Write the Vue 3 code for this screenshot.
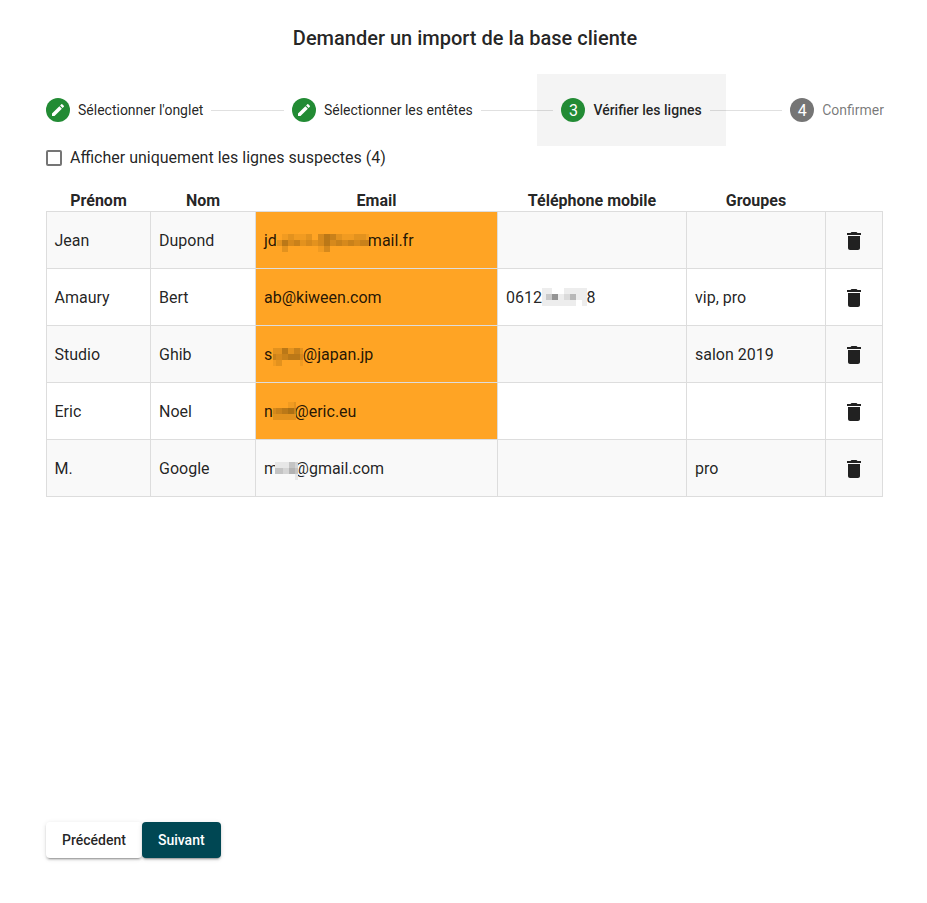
<script setup>
import { ref } from 'vue'

const steps = [
  { label: "Sélectionner l'onglet", done: true },
  { label: 'Sélectionner les entêtes', done: true },
  { label: 'Vérifier les lignes', active: true },
  { label: 'Confirmer' },
]
const headers = ['Prénom', 'Nom', 'Email', 'Téléphone mobile', 'Groupes', '']
const suspectOnly = ref(false)

// Masks hide part of a value: each digit is the darkness of one mosaic block.
const rows = [
  {
    first: 'Jean', last: 'Dupond', suspect: true, phone: null, groups: '',
    email: { before: 'jd', after: 'mail.fr', width: 92, shift: 5, size: 6, top: 4, pull: [0, -1], lines: ['0121120354211221', '2534232353434344', '0200000130000000'] },
  },
  {
    first: 'Amaury', last: 'Bert', suspect: true, groups: 'vip, pro',
    email: { before: 'ab@kiween.com' },
    phone: { before: '0612', after: '8', width: 45, shift: 4, size: 6, top: 1, pull: [0, -0.5], lines: ['11001111', '13612411', '11111101'] },
  },
  {
    first: 'Studio', last: 'Ghib', suspect: true, phone: null, groups: 'salon 2019',
    email: { before: 's', after: '@japan.jp', width: 30, shift: 3, size: 6, top: 4, pull: [0.6, 0], lines: ['225242', '434553', '120001'] },
  },
  {
    first: 'Eric', last: 'Noel', suspect: true, phone: null, groups: '',
    email: { before: 'n', after: '@eric.eu', width: 23, shift: 3, size: 6, top: 1, pull: [0, -1.5], lines: ['00012', '34564', '22222'] },
  },
  {
    first: 'M.', last: 'Google', suspect: false, phone: null, groups: 'pro',
    email: { before: 'm', after: '@gmail.com', width: 23, shift: 2, size: 6, top: 4, pull: [-3, -3.5], lines: ['11132', '33243', '00001'] },
  },
]

function blocks(mask) {
  return mask.lines.flatMap((line, r) =>
    [...line].map((level, c) => {
      const x = c === 0 ? 0 : mask.shift + (c - 1) * mask.size
      return { x, y: mask.top + r * mask.size, w: c === 0 ? mask.shift : mask.size, o: Number(level) * 0.07 }
    }),
  )
}
</script>

<template>
  <main class="page">
    <h1>Demander un import de la base cliente</h1>
    <nav class="stepper">
      <template v-for="(step, i) in steps" :key="step.label">
        <div v-if="i" class="line"></div>
        <div class="step" :class="{ done: step.done, active: step.active }">
          <span class="badge">
            <svg v-if="step.done" width="16" height="16" viewBox="0 0 24 24" fill="currentColor">
              <path d="M3 17.25V21h3.75L17.81 9.94l-3.75-3.75L3 17.25zM20.71 7.04a1 1 0 0 0 0-1.41l-2.34-2.34a1 1 0 0 0-1.41 0l-1.83 1.83 3.75 3.75 1.83-1.83z" />
            </svg>
            <span v-else class="number">{{ i + 1 }}</span>
          </span>
          <span class="label">{{ step.label }}</span>
        </div>
      </template>
    </nav>
    <label class="filter">
      <input v-model="suspectOnly" type="checkbox" />
      <span>Afficher uniquement les lignes suspectes (4)</span>
    </label>
    <table>
      <colgroup>
        <col class="c1" /><col class="c2" /><col class="c3" /><col class="c4" /><col class="c5" /><col class="c6" />
      </colgroup>
      <thead>
        <tr><th v-for="h in headers" :key="h">{{ h }}</th></tr>
      </thead>
      <tbody>
        <tr v-for="row in rows" v-show="!suspectOnly || row.suspect" :key="row.last">
          <td class="first">{{ row.first }}</td>
          <td>{{ row.last }}</td>
          <td v-for="(value, k) in [row.email, row.phone]" :key="k" :class="{ suspect: k === 0 && row.suspect }">
            <div v-if="value" class="value">
              <span>{{ value.before }}</span>
              <svg
                v-if="value.lines"
                class="mask"
                :width="value.width"
                height="22"
                shape-rendering="crispEdges"
                :style="{ marginLeft: value.pull[0] + 'px', marginRight: value.pull[1] + 'px' }"
              >
                <rect class="base" :y="value.top" :width="value.width" height="18" />
                <rect v-for="(b, n) in blocks(value)" :key="n" class="block" :x="b.x" :y="b.y" :width="b.w" height="6" :fill-opacity="b.o" />
              </svg>
              <span>{{ value.after }}</span>
            </div>
          </td>
          <td>{{ row.groups }}</td>
          <td class="action">
            <button class="trash" aria-label="Supprimer">
              <svg width="24" height="24" viewBox="0 0 24 24" fill="currentColor">
                <path d="M6 19c0 1.1.9 2 2 2h8c1.1 0 2-.9 2-2V7H6v12zM19 4h-3.5l-1-1h-5l-1 1H5v2h14V4z" />
              </svg>
            </button>
          </td>
        </tr>
      </tbody>
    </table>
    <footer>
      <button class="btn">Précédent</button>
      <button class="btn primary">Suivant</button>
    </footer>
  </main>
</template>

<style>
body {
  margin: 0;
  background: #fff;
}
</style>

<style scoped>
.page {
  box-sizing: border-box;
  display: flex;
  flex-direction: column;
  height: 903px;
  padding: 22px 43px 45px 46px;
  font: 16px/24px Roboto, sans-serif;
  color: rgba(0, 0, 0, 0.87);
}
h1 {
  margin: 0 0 20px;
  font-size: 20px;
  line-height: 32px;
  font-weight: 500;
  text-align: center;
}
.stepper {
  display: flex;
  align-items: center;
  margin: 0 -24px;
}
.step {
  display: flex;
  align-items: center;
  height: 72px;
  padding: 0 24px;
  font-size: 14px;
  white-space: nowrap;
  color: rgba(0, 0, 0, 0.54);
}
.step.done {
  color: rgba(0, 0, 0, 0.87);
}
.step.active {
  background: #f4f4f4;
  color: rgba(0, 0, 0, 0.87);
  font-weight: 500;
}
.badge {
  display: flex;
  align-items: center;
  justify-content: center;
  width: 24px;
  height: 24px;
  margin-right: 8px;
  border-radius: 50%;
  background: #757575;
  color: #fff;
  font-size: 16px;
  font-weight: 400;
}
.number {
  padding-top: 1px;
}
.done .badge,
.active .badge {
  background: #228b34;
}
.line {
  flex: 1;
  height: 1px;
  margin: 0 -16px;
  background: rgba(0, 0, 0, 0.12);
  z-index: 1;
}
.filter {
  display: flex;
  align-items: center;
  gap: 8px;
  height: 24px;
}
.filter input {
  appearance: none;
  box-sizing: border-box;
  width: 16px;
  height: 16px;
  margin: 0;
  border: 2px solid #757575;
  border-radius: 2px;
}
table {
  table-layout: fixed;
  width: 837px;
  margin-top: 20px;
  border-collapse: collapse;
}
.c1 { width: 104px; }
.c2 { width: 105px; }
.c3 { width: 242px; }
.c4 { width: 189px; }
.c5 { width: 139px; }
.c6 { width: 57px; }
th {
  height: 21px;
  padding: 0;
  line-height: 21px;
  font-weight: 700;
}
td {
  box-sizing: border-box;
  height: 57px;
  padding: 2px 8px 0;
  border: 1px solid #ddd;
}
td.first {
  padding-left: 7.5px;
}
tbody tr:nth-child(odd) {
  background: #f9f9f9;
}
td.suspect {
  background: #ffa424;
}
.value {
  display: flex;
  align-items: center;
}
.mask {
  flex: none;
  z-index: 1;
}
.base {
  fill: #fff;
}
tr:nth-child(odd) .base {
  fill: #f9f9f9;
}
tr .suspect .base {
  fill: #ffa424;
}
.block {
  fill: #000;
}
.suspect .block {
  fill: #3c2800;
}
td.action {
  padding: 2px 0 0;
}
.trash {
  display: flex;
  margin: 0 auto;
  padding: 0;
  border: 0;
  background: none;
  color: rgba(0, 0, 0, 0.87);
}
footer {
  display: flex;
  margin-top: auto;
}
.btn {
  height: 36px;
  padding: 0 16px;
  border: 0;
  border-radius: 4px;
  background: #fff;
  color: rgba(0, 0, 0, 0.87);
  font: 500 14px/36px Roboto, sans-serif;
  box-shadow: 0 3px 1px -2px rgba(0, 0, 0, 0.2), 0 2px 2px rgba(0, 0, 0, 0.14), 0 1px 5px rgba(0, 0, 0, 0.12);
}
.primary {
  background: #004753;
  color: #fff;
}
</style>
